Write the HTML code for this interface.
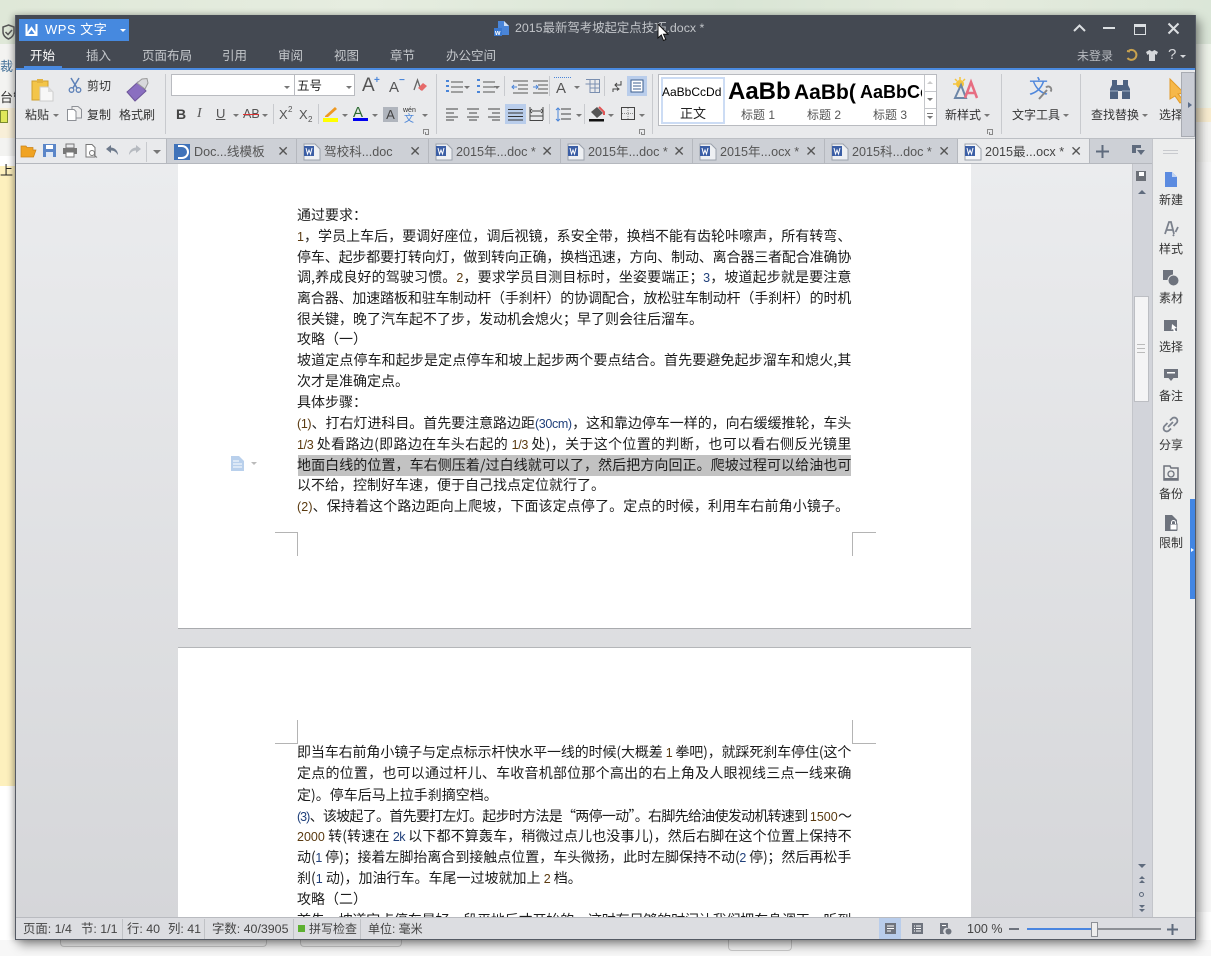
<!DOCTYPE html>
<html lang="zh"><head><meta charset="utf-8"><title>WPS 文字</title>
<style>
html,body{margin:0;padding:0}
body{width:1211px;height:956px;position:relative;overflow:hidden;background:#fff;font-family:"Liberation Sans","Noto Sans CJK SC",sans-serif;font-size:12px;color:#333}
.a{position:absolute;white-space:nowrap}
svg{position:absolute;overflow:visible}
.tab{position:absolute;top:139px;height:25px;background:#cdd0d6;border-right:1px solid #b5b8be;box-sizing:border-box;color:#555;font-size:12.6px;line-height:26px;white-space:nowrap}
.tab span{position:absolute;left:27px;top:0}
.tab i{position:absolute;right:7px;top:0;font-style:normal;font-size:14px;color:#555;font-family:"DejaVu Sans",sans-serif}
.tab svg{left:7px;top:5px}
.l{position:absolute;left:297px;width:554px;height:21px;font-size:14px;line-height:21px;color:#1c1c1c;white-space:nowrap;font-family:"Noto Sans CJK SC","WenQuanYi Zen Hei",sans-serif}
.l span{font-size:12.5px;font-family:"Liberation Sans",sans-serif}
.j{white-space:normal;text-align:justify;text-align-last:justify;text-justify:inter-character;letter-spacing:-.35px}
.menu{position:absolute;top:47px;color:#c5c8cc;font-size:12.5px;line-height:18px;white-space:nowrap}
.rb{position:absolute;font-size:12px;line-height:16px;color:#333;white-space:nowrap}
.arr{position:absolute;width:0;height:0;border-left:3px solid transparent;border-right:3px solid transparent;border-top:3px solid #777}
.sep{position:absolute;width:1px;background:#c8cace}
.side{position:absolute;left:1150px;width:42px;text-align:center;font-size:12px;color:#333;line-height:16px;margin-top:1px}
.st{position:absolute;top:922px;font-size:12.4px;line-height:15px;color:#444;white-space:nowrap}
.stsep{position:absolute;top:919px;width:1px;height:20px;background:#c0c2c6}
.gb{font-weight:700;color:#000;position:absolute;white-space:nowrap;overflow:hidden}
</style></head><body>

<!-- background behind the window -->
<div class="a" style="left:0;top:0;width:1211px;height:44px;background:linear-gradient(90deg,#dfe8d8,#e6ede0 30%,#d9e5d5 60%,#e4ebdd 80%,#dbe6d8)"></div>
<div class="a" style="left:0;top:44px;width:15px;height:112px;background:#f3f3f1"></div>
<div class="a" style="left:0;top:108px;width:15px;height:30px;background:#f8efd8"></div>
<div class="a" style="left:0;top:166px;width:15px;height:620px;background:#fdf0bd"></div>
<div class="a" style="left:0;top:160px;font-size:13px;color:#222">上</div>
<div class="a" style="left:0;top:56px;font-size:13px;color:#47739b">裁</div>
<div class="a" style="left:0;top:87px;font-size:13px;color:#333">台管</div>
<div class="a" style="left:1196px;top:44px;width:15px;height:65px;background:#eef3ea"></div>
<div class="a" style="left:1196px;top:108px;width:15px;height:14px;background:#f9edd0"></div>
<div class="a" style="left:1196px;top:122px;width:15px;height:40px;background:#f4f4f2"></div>
<div class="a" style="left:1196px;top:162px;width:15px;height:750px;background:#f7f7f7"></div>
<div class="a" style="left:0;top:940px;width:1211px;height:16px;background:#f7f7f7"></div>
<div class="a" style="left:60px;top:940px;width:205px;height:6px;border:1px solid #ccc;border-top:0;border-radius:0 0 4px 4px"></div>
<div class="a" style="left:300px;top:940px;width:100px;height:6px;border:1px solid #ccc;border-top:0;border-radius:0 0 4px 4px"></div>
<div class="a" style="left:728px;top:940px;width:62px;height:10px;border:1px solid #ccc;border-top:0;border-radius:0 0 4px 4px"></div>

<!-- window -->
<div class="a" style="left:15px;top:15px;width:1181px;height:925px;background:#d5d6d9;box-shadow:4px 5px 10px rgba(0,0,0,.4),-2px 0 6px rgba(0,0,0,.25)"></div>

<!-- title bar -->
<div class="a" style="left:15px;top:15px;width:1181px;height:53px;background:#444952"></div>
<div class="a" style="left:19px;top:19px;width:110px;height:22px;background:#4689df"></div>
<svg style="left:25px;top:24px" width="13" height="12" viewBox="0 0 13 12"><path d="M1.5 0V11H11.5V0M1.5 11L6.5 4L11.500 11" fill="none" stroke="#fff" stroke-width="2"/></svg>
<div class="a" style="left:45px;top:22px;color:#fff;font-size:13px;line-height:16px;letter-spacing:.5px">WPS 文字</div>
<div class="arr" style="left:120px;top:29px;border-top-color:#fff"></div>
<svg style="left:494px;top:21px" width="16" height="15" viewBox="0 0 16 15"><path d="M4 0H10L15 5V14H4Z" fill="#4a85d8"/><path d="M10 0L15 5H10Z" fill="#cfe0f7"/><rect x="0" y="7" width="8" height="8" fill="#3a78cf"/><text x="1" y="14" font-size="7" fill="#fff" font-weight="700">w</text></svg>
<div class="a" style="left:515px;top:20px;color:#c2c5c9;font-size:12.4px;line-height:17px">2015最新驾考坡起定点技巧.docx *</div>
<svg style="left:657px;top:23px" width="12" height="19" viewBox="0 0 12 19"><path d="M1 1V15L4.300 12L6.500 17.500L8.800 16.500L6.500 11.300H11Z" fill="#fff" stroke="#111" stroke-width="1"/></svg>
<svg style="left:1073px;top:24px" width="13" height="8" viewBox="0 0 13 8"><path d="M1 7L6.500 1.500L12 7" fill="none" stroke="#dcdfe2" stroke-width="2"/></svg>
<div class="a" style="left:1103px;top:27px;width:12px;height:2px;background:#dcdfe2"></div>
<div class="a" style="left:1134px;top:24px;width:10px;height:7px;border:1px solid #dcdfe2;border-top:3px solid #dcdfe2"></div>
<svg style="left:1168px;top:23px" width="11" height="11" viewBox="0 0 11 11"><path d="M.5 .5L10.500 10.500M10.500 .5L.5 10.500" stroke="#dcdfe2" stroke-width="2"/></svg>

<div class="menu" style="left:30px;color:#fff">开始</div>
<div class="menu" style="left:86px">插入</div>
<div class="menu" style="left:142px">页面布局</div>
<div class="menu" style="left:222px">引用</div>
<div class="menu" style="left:278px">审阅</div>
<div class="menu" style="left:334px">视图</div>
<div class="menu" style="left:390px">章节</div>
<div class="menu" style="left:446px">办公空间</div>
<div class="a" style="left:24px;top:66px;width:38px;height:2px;background:#4a8ae0"></div>
<div class="menu" style="left:1077px;top:47px;font-size:12px;color:#b8bbc0">未登录</div>
<svg style="left:1126px;top:49px" width="12" height="13" viewBox="0 0 12 13"><path d="M3 1.500A5 5 0 1 1 1.500 9M4 2.500L1 2" fill="none" stroke="#c9a24e" stroke-width="2"/></svg>
<svg style="left:1146px;top:50px" width="12" height="11" viewBox="0 0 12 11"><path d="M3.500 0L0 2L1.500 5L3 4V11H9V4L10.500 5L12 2L8.500 0L6 1.500Z" fill="#d6d8db"/></svg>
<div class="a" style="left:1168px;top:46px;font-size:15px;line-height:18px;color:#d6d8db">?</div>
<div class="arr" style="left:1180px;top:55px;border-top-color:#d6d8db"></div>

<!-- ribbon -->
<div class="a" style="left:15px;top:68px;width:1181px;height:2px;background:#4a8ae0"></div>
<div class="a" style="left:15px;top:70px;width:1181px;height:68px;background:#e9eaec"></div>
<div class="a" style="left:15px;top:138px;width:1181px;height:1px;background:#bcbfc4"></div>

<!-- paste -->
<svg style="left:31px;top:78px" width="24" height="24" viewBox="0 0 24 24"><rect x="1" y="3" width="16" height="19" fill="#f3c549" stroke="#cfa030"/><rect x="6" y="1" width="6" height="4" fill="#e3b33f"/><path d="M9 9H17L22 14V23H9Z" fill="#f7f7f7" stroke="#ccc"/><path d="M17 9L22 14H17Z" fill="#ddd"/></svg>
<div class="rb" style="left:25px;top:107px">粘贴</div><div class="arr" style="left:53px;top:114px"></div>
<svg style="left:68px;top:78px" width="14" height="15" viewBox="0 0 14 15"><path d="M3 0L9 10M11 0L5 10" stroke="#5d81b8" stroke-width="1.500"/><circle cx="3.500" cy="12" r="2.300" fill="none" stroke="#5d81b8" stroke-width="1.300"/><circle cx="10.500" cy="12" r="2.300" fill="none" stroke="#5d81b8" stroke-width="1.300"/></svg>
<div class="rb" style="left:87px;top:78px">剪切</div>
<svg style="left:67px;top:106px" width="15" height="15" viewBox="0 0 15 15"><path d="M5 .5H11L14.500 3.500V12H5Z" fill="#eee" stroke="#8d9096"/><path d="M.5 3.500H7L9 5.500V14.500H.5Z" fill="#fff" stroke="#8d9096"/></svg>
<div class="rb" style="left:87px;top:107px">复制</div>
<svg style="left:126px;top:77px" width="24" height="25" viewBox="0 0 24 25"><path d="M1 15L12 5L20 14L9 24Z" fill="#8a6fc0" stroke="#6d5599"/><path d="M11 6L16 2L21 1.500L22 6L19 12Z" fill="#d8d8dc" stroke="#999"/></svg>
<div class="rb" style="left:119px;top:107px">格式刷</div>
<div class="sep" style="left:165px;top:74px;height:60px"></div>

<!-- font boxes -->
<div class="a" style="left:171px;top:74px;width:184px;height:22px;background:#fff;border:1px solid #b9bbc0;box-sizing:border-box"></div>
<div class="a" style="left:294px;top:74px;width:1px;height:22px;background:#b9bbc0"></div>
<div class="a" style="left:297px;top:78px;font-size:12.500px;line-height:16px;color:#222">五号</div>
<div class="arr" style="left:284px;top:86px"></div><div class="arr" style="left:346px;top:86px"></div>
<div class="a" style="left:362px;top:74px;font-size:19px;line-height:24px;color:#555">A</div><div class="a" style="left:374px;top:76px;font-size:10px;line-height:10px;color:#4a85d8;font-weight:700">+</div>
<div class="a" style="left:389px;top:78px;font-size:15px;line-height:20px;color:#555">A</div><div class="a" style="left:399px;top:76px;font-size:10px;line-height:10px;color:#4a85d8;font-weight:700">−</div>
<svg style="left:412px;top:78px" width="16" height="16" viewBox="0 0 16 16"><path d="M2 12L5.500 2L9 12" fill="none" stroke="#666" stroke-width="1.300"/><path d="M6 10L11 5L15 8L10 13Z" fill="#e66a6a"/></svg>

<div class="a" style="left:176px;top:105px;font-size:14px;line-height:18px;font-weight:700;color:#444">B</div>
<div class="a" style="left:197px;top:105px;font-size:14px;line-height:18px;font-style:italic;color:#555;font-family:'Liberation Serif',serif">I</div>
<div class="a" style="left:216px;top:105px;font-size:13px;line-height:18px;color:#555;text-decoration:underline">U</div><div class="arr" style="left:233px;top:114px"></div>
<div class="a" style="left:243px;top:106px;font-size:12.500px;line-height:17px;color:#555">AB</div><div class="a" style="left:243px;top:114px;width:16px;height:1px;background:#d33"></div><div class="arr" style="left:262px;top:114px"></div>
<div class="sep" style="left:273px;top:104px;height:20px"></div>
<div class="a" style="left:279px;top:106px;font-size:13px;line-height:17px;color:#555">X</div><div class="a" style="left:288px;top:105px;font-size:8px;line-height:9px;color:#555">2</div>
<div class="a" style="left:299px;top:106px;font-size:13px;line-height:17px;color:#555">X</div><div class="a" style="left:308px;top:115px;font-size:8px;line-height:9px;color:#555">2</div>
<div class="sep" style="left:318px;top:104px;height:20px"></div>
<svg style="left:323px;top:106px" width="16" height="16" viewBox="0 0 16 16"><path d="M2 10L12 1L14 3L5 11L2 11Z" fill="#ee9922"/><rect x="0" y="12" width="15" height="4" fill="#ff0"/></svg><div class="arr" style="left:342px;top:114px"></div>
<div class="a" style="left:353px;top:104px;font-size:15px;line-height:17px;color:#2c6a30">A</div><div class="a" style="left:353px;top:118px;width:15px;height:3px;background:#0000f0"></div><div class="arr" style="left:372px;top:114px"></div>
<div class="a" style="left:383px;top:107px;width:15px;height:15px;background:#b0b5bd;color:#444;font-size:13px;line-height:16px;text-align:center">A</div>
<div class="a" style="left:403px;top:107px;font-size:7px;line-height:8px;color:#333">wén</div><div class="a" style="left:404px;top:114px;font-size:10px;line-height:11px;color:#4a85d8">文</div><div class="arr" style="left:422px;top:114px"></div>
<div class="sep" style="left:436px;top:74px;height:60px"></div>
<svg style="left:423px;top:129px" width="6" height="6" viewBox="0 0 6 6"><path d="M.5 5V.5H5.500V5.500H2.500V3" fill="none" stroke="#888"/></svg>

<!-- paragraph -->
<svg style="left:445px;top:79px;" width="130" height="16" viewBox="0 0 130 16" fill="none" stroke="#555"><path d="M6 3H18M6 8H18M6 13H18"/><path d="M1 2H4M1 7H4M1 12H4" stroke="#4a85d8" stroke-width="2" stroke-dasharray="2 0"/><path d="M38 3H50M38 8H50M38 13H50"/><path d="M32 1H35M32 7H35M32 13H35" stroke="#4a85d8" stroke-width="2"/><path d="M68 2H83M73 6H83M73 10H83M68 14H83"/><path d="M72 8H67M69 6L67 8L69 10" stroke="#4a85d8"/><path d="M88 2H103M93 6H103M93 10H103M88 14H103"/><path d="M88 8H93M91 6L93 8L91 10" stroke="#4a85d8"/></svg>
<div class="arr" style="left:464px;top:86px"></div><div class="arr" style="left:494px;top:86px"></div>
<div class="sep" style="left:504px;top:76px;height:20px"></div><div class="sep" style="left:549px;top:76px;height:20px"></div><div class="sep" style="left:604px;top:76px;height:20px"></div>
<div class="a" style="left:556px;top:80px;font-size:15px;line-height:17px;color:#555">A</div>
<div class="a" style="left:554px;top:77px;width:17px;height:4px;border-top:1px dotted #4a85d8"></div>
<div class="arr" style="left:574px;top:86px"></div>
<svg style="left:585px;top:79px" width="15" height="14" viewBox="0 0 15 14"><path d="M1 .5H14.500V13.500H5V5H.5M5 .5V13.500M10 .5V13.500M5 5H14.500M5 9H14.500" fill="none" stroke="#7a8fb0"/></svg>
<svg style="left:611px;top:80px" width="12" height="13" viewBox="0 0 12 13"><path d="M10 1V5H4M6 3L4 5L6 7M2 12V9H7M6 7.500L8 9L6 10.500" fill="none" stroke="#444"/></svg>
<div class="a" style="left:627px;top:76px;width:20px;height:20px;background:#b9cdeb"></div>
<svg style="left:630px;top:79px" width="14" height="14" viewBox="0 0 14 14"><rect x="1" y="1" width="12" height="12" fill="#fff" stroke="#3d5f8f"/><path d="M3 4H11M3 7H11M3 10H11" stroke="#3d5f8f"/></svg>

<svg style="left:445px;top:107px" width="70" height="14" viewBox="0 0 70 14" fill="none" stroke="#444"><path d="M1 2H13M1 6H9M1 10H13M1 13H9"/><path d="M22 2H34M24 6H32M22 10H34M24 13H32"/><path d="M43 2H55M47 6H55M43 10H55M47 13H55"/></svg>
<div class="a" style="left:505px;top:104px;width:21px;height:20px;background:#b9cdeb"></div>
<svg style="left:508px;top:108px" width="15" height="13" viewBox="0 0 15 13" fill="none" stroke="#333"><path d="M0 1.500H15M0 5H15M0 8.500H15M0 12H15"/></svg>
<svg style="left:529px;top:107px" width="15" height="14" viewBox="0 0 15 14" fill="none" stroke="#444"><path d="M1 0V13.500H14M14 0V13M3 4H12M1 9H14M3 2L1 4L3 6M12 2L14 4L12 6" /></svg>
<div class="sep" style="left:549px;top:104px;height:20px"></div>
<svg style="left:555px;top:107px" width="16" height="15" viewBox="0 0 16 15" fill="none"><path d="M6 2H16M6 7H16M6 12H16" stroke="#444"/><path d="M3 1V14M1 3L3 1L5 3M1 12L3 14L5 12" stroke="#4a85d8"/></svg>
<div class="arr" style="left:576px;top:114px"></div>
<div class="sep" style="left:584px;top:104px;height:20px"></div>
<svg style="left:589px;top:106px" width="16" height="16" viewBox="0 0 16 16"><path d="M2 6L8 1L14 7L8 12Z" fill="#555"/><path d="M10 1L15 6L15 9" fill="none" stroke="#e05555" stroke-width="2"/><rect x="0" y="13" width="15" height="2.500" fill="#111"/></svg><div class="arr" style="left:608px;top:114px"></div>
<svg style="left:621px;top:107px" width="14" height="13" viewBox="0 0 14 13" fill="none"><rect x=".5" y=".5" width="13" height="12" stroke="#444"/><path d="M7 1V12M1 6.500H13" stroke="#888" stroke-dasharray="1 1"/></svg><div class="arr" style="left:639px;top:114px"></div>
<div class="sep" style="left:652px;top:74px;height:60px"></div>
<svg style="left:639px;top:129px" width="6" height="6" viewBox="0 0 6 6"><path d="M.5 5V.5H5.500V5.500H2.500V3" fill="none" stroke="#888"/></svg>

<!-- styles gallery -->
<div class="a" style="left:658px;top:74px;width:279px;height:52px;background:#fff;border:1px solid #b9bbc0;box-sizing:border-box"></div>
<div class="a" style="left:661px;top:77px;width:64px;height:47px;border:2px solid #ccdcf4;box-sizing:border-box"></div>
<div class="a" style="left:662px;top:84px;font-size:12px;line-height:16px;color:#000">AaBbCcDd</div>
<div class="rb" style="left:680px;top:106px;font-size:13px;color:#222">正文</div>
<div class="gb" style="left:728px;top:78px;font-size:24px;line-height:28px;width:63px">AaBb</div>
<div class="rb" style="left:741px;top:107px;color:#555">标题 1</div>
<div class="gb" style="left:794px;top:80px;font-size:21px;line-height:25px;width:62px">AaBb(</div>
<div class="rb" style="left:807px;top:107px;color:#555">标题 2</div>
<div class="gb" style="left:860px;top:81px;font-size:18px;line-height:23px;width:62px">AaBbCc</div>
<div class="rb" style="left:873px;top:107px;color:#555">标题 3</div>
<div class="a" style="left:924px;top:75px;width:1px;height:50px;background:#c5c7cb"></div>
<div class="a" style="left:925px;top:91px;width:11px;height:1px;background:#c5c7cb"></div><div class="a" style="left:925px;top:108px;width:11px;height:1px;background:#c5c7cb"></div>
<div class="a" style="left:927px;top:81px;width:0;height:0;border-left:3px solid transparent;border-right:3px solid transparent;border-bottom:3px solid #ccc"></div>
<div class="arr" style="left:927px;top:98px"></div><div class="arr" style="left:927px;top:116px"></div><div class="a" style="left:927px;top:113px;width:6px;height:1px;background:#777"></div>

<svg style="left:953px;top:77px" width="25" height="22" viewBox="0 0 25 22"><circle cx="7" cy="7" r="4" fill="#f5c43c"/><path d="M7 0V3M0 7H3M2 2L4 4M12 2L10 4" stroke="#f5c43c" stroke-width="1.500"/><path d="M2 21L8 8L13 21Z" fill="none" stroke="#6d87a8" stroke-width="2"/><path d="M12 21L18 5L24 21M14 16H22" fill="none" stroke="#e76d81" stroke-width="2.500"/></svg>
<div class="rb" style="left:945px;top:107px">新样式</div><div class="arr" style="left:984px;top:114px"></div>
<svg style="left:987px;top:129px" width="6" height="6" viewBox="0 0 6 6"><path d="M.5 5V.5H5.500V5.500H2.500V3" fill="none" stroke="#888"/></svg>
<div class="sep" style="left:1001px;top:74px;height:60px"></div>
<div class="a" style="left:1029px;top:76px;font-size:19px;line-height:23px;color:#4f87dc">文</div>
<svg style="left:1037px;top:86px" width="15" height="15" viewBox="0 0 15 15"><path d="M2 13L10 4M9 1.500A3 3 0 0 1 13.500 5.500" fill="none" stroke="#888" stroke-width="2"/></svg>
<div class="rb" style="left:1012px;top:107px">文字工具</div><div class="arr" style="left:1063px;top:114px"></div>
<div class="sep" style="left:1080px;top:74px;height:60px"></div>
<svg style="left:1109px;top:79px" width="22" height="21" viewBox="0 0 22 21"><path d="M3 1H8V6H14V1H19V6L21 10V20H13V12H9V20H1V10L3 6Z" fill="#4d6280"/><path d="M1 12H9M13 12H21" stroke="#9fb0c6"/></svg>
<div class="rb" style="left:1091px;top:107px">查找替换</div><div class="arr" style="left:1142px;top:114px"></div>
<svg style="left:1170px;top:79px" width="14" height="24" viewBox="0 0 14 24"><path d="M0 0L14 14L8 15L14 22L10 24L5 17L0 20Z" fill="#f6b84a" stroke="#e29a27"/></svg>
<div class="rb" style="left:1159px;top:107px">选择</div>
<div class="a" style="left:1181px;top:72px;width:14px;height:65px;background:#c9ccd4;border:1px solid #a8abb2;box-sizing:border-box"></div>
<div class="a" style="left:1188px;top:102px;width:0;height:0;border-top:3px solid transparent;border-bottom:3px solid transparent;border-left:4px solid #5c6e8a"></div>

<!-- tab bar -->
<div class="a" style="left:15px;top:139px;width:1137px;height:25px;background:#e9eaec"></div>
<svg style="left:21px;top:144px" width="15" height="14" viewBox="0 0 15 14"><path d="M0 2H5L6 3.500H12V6H15L12.500 13H0Z" fill="#f0a322" stroke="#c9831a" stroke-width=".7"/></svg>
<svg style="left:43px;top:144px" width="13" height="13" viewBox="0 0 13 13"><path d="M0 0H13V13H0Z" fill="#5b86c8"/><rect x="3" y="1" width="7" height="4" fill="#fff"/><rect x="3" y="8" width="7" height="5" fill="#dfe8f5"/></svg>
<svg style="left:63px;top:144px" width="14" height="13" viewBox="0 0 14 13"><rect x="3" y="0" width="8" height="4" fill="none" stroke="#777"/><rect x="0" y="4" width="14" height="6" fill="#777"/><rect x="3" y="8" width="8" height="5" fill="#fff" stroke="#777"/></svg>
<svg style="left:85px;top:144px" width="13" height="14" viewBox="0 0 13 14"><path d="M1 .5H7L10 3.500V13H1Z" fill="#fff" stroke="#777"/><circle cx="7" cy="9" r="2.500" fill="none" stroke="#777"/><path d="M9 11L12 13.500" stroke="#777"/></svg>
<svg style="left:106px;top:145px" width="13" height="11" viewBox="0 0 13 11"><path d="M5 0L0 4L5 8V5.500C8 5.500 10 7 12 10C12 6 9 2.700 5 2.500Z" fill="#6e7a8c"/></svg>
<svg style="left:128px;top:145px" width="13" height="11" viewBox="0 0 13 11"><path d="M8 0L13 4L8 8V5.500C5 5.500 3 7 1 10C1 6 4 2.700 8 2.500Z" fill="#b6bac0"/></svg>
<div class="sep" style="left:146px;top:142px;height:20px"></div>
<div class="arr" style="left:153px;top:150px;border-left-width:4px;border-right-width:4px;border-top-width:4px"></div>
<div class="a" style="left:166px;top:139px;width:1px;height:25px;background:#b5b8be"></div>

<div class="tab" style="left:167px;width:130px"><svg width="16" height="16" viewBox="0 0 16 16"><rect width="16" height="16" fill="#3f72b9"/><path d="M4 2H8A6 6 0 0 1 8 14H4" fill="none" stroke="#fff" stroke-width="2"/></svg><span>Doc...线模板</span><i>✕</i></div>
<div class="tab" style="left:297px;width:132px"><svg width="16" height="16" viewBox="0 0 16 16"><path d="M0 0H11L16 5V16H0Z" fill="#eef0f3" stroke="#9ca2ac"/><rect x="0" y="2" width="10" height="10" fill="#3b5ea5"/><path d="M2 4L3.500 10L5 6L6.500 10L8 4" fill="none" stroke="#fff"/></svg><span>驾校科...doc</span><i>✕</i></div>
<div class="tab" style="left:429px;width:132px"><svg width="16" height="16" viewBox="0 0 16 16"><path d="M0 0H11L16 5V16H0Z" fill="#eef0f3" stroke="#9ca2ac"/><rect x="0" y="2" width="10" height="10" fill="#3b5ea5"/><path d="M2 4L3.500 10L5 6L6.500 10L8 4" fill="none" stroke="#fff"/></svg><span>2015年...doc *</span><i>✕</i></div>
<div class="tab" style="left:561px;width:132px"><svg width="16" height="16" viewBox="0 0 16 16"><path d="M0 0H11L16 5V16H0Z" fill="#eef0f3" stroke="#9ca2ac"/><rect x="0" y="2" width="10" height="10" fill="#3b5ea5"/><path d="M2 4L3.500 10L5 6L6.500 10L8 4" fill="none" stroke="#fff"/></svg><span>2015年...doc *</span><i>✕</i></div>
<div class="tab" style="left:693px;width:132px"><svg width="16" height="16" viewBox="0 0 16 16"><path d="M0 0H11L16 5V16H0Z" fill="#eef0f3" stroke="#9ca2ac"/><rect x="0" y="2" width="10" height="10" fill="#3b5ea5"/><path d="M2 4L3.500 10L5 6L6.500 10L8 4" fill="none" stroke="#fff"/></svg><span>2015年...ocx *</span><i>✕</i></div>
<div class="tab" style="left:825px;width:133px"><svg width="16" height="16" viewBox="0 0 16 16"><path d="M0 0H11L16 5V16H0Z" fill="#eef0f3" stroke="#9ca2ac"/><rect x="0" y="2" width="10" height="10" fill="#3b5ea5"/><path d="M2 4L3.500 10L5 6L6.500 10L8 4" fill="none" stroke="#fff"/></svg><span>2015科...doc *</span><i>✕</i></div>
<div class="tab" style="left:958px;width:132px;background:#e9eaec"><svg width="16" height="16" viewBox="0 0 16 16"><path d="M0 0H11L16 5V16H0Z" fill="#f6f7f8" stroke="#9ca2ac"/><rect x="0" y="2" width="10" height="10" fill="#3b5ea5"/><path d="M2 4L3.500 10L5 6L6.500 10L8 4" fill="none" stroke="#fff"/></svg><span style="color:#444">2015最...ocx *</span><i>✕</i></div>
<div class="tab" style="left:1090px;width:62px;background:#cdd0d6;border-right:0"></div>
<svg style="left:1096px;top:145px" width="13" height="13" viewBox="0 0 13 13"><path d="M6.500 0V13M0 6.500H13" stroke="#5f6b7d" stroke-width="2"/></svg>
<svg style="left:1132px;top:145px" width="13" height="11" viewBox="0 0 13 11"><path d="M0 0H9V3H4V8H0Z" fill="#5f6b7d"/><path d="M5 5H13L9 10Z" fill="#5f6b7d"/></svg>
<div class="a" style="left:15px;top:163px;width:1137px;height:1px;background:#b5b8be"></div>

<!-- document area -->
<div class="a" style="left:16px;top:164px;width:1116px;height:753px;background:linear-gradient(180deg,#ebecee,#d5d6d9)"></div>
<div class="a" style="left:178px;top:164px;width:793px;height:464px;background:#fff;border-bottom:1px solid #a9abae;box-sizing:content-box"></div>
<div class="a" style="left:178px;top:647px;width:793px;height:1px;background:#b4b6b9"></div>
<div class="a" style="left:178px;top:648px;width:793px;height:269px;background:#fff"></div>

<!-- crop marks -->
<div class="a" style="left:275px;top:532px;width:22px;height:23px;border-top:1px solid #b4b4b4;border-right:1px solid #b4b4b4"></div>
<div class="a" style="left:852px;top:532px;width:23px;height:23px;border-top:1px solid #b4b4b4;border-left:1px solid #b4b4b4"></div>
<div class="a" style="left:275px;top:720px;width:22px;height:23px;border-bottom:1px solid #b4b4b4;border-right:1px solid #b4b4b4"></div>
<div class="a" style="left:852px;top:720px;width:23px;height:23px;border-bottom:1px solid #b4b4b4;border-left:1px solid #b4b4b4"></div>

<!-- selection -->
<div class="a" style="left:298px;top:455px;width:553px;height:21px;background:#c2c2c2"></div>
<svg style="left:231px;top:456px" width="14" height="15" viewBox="0 0 14 15"><path d="M0 0H8L13 5V15H0Z" fill="#b9d0ec"/><path d="M2 5H8M2 8H11M2 11H11" stroke="#fff"/></svg>
<div class="arr" style="left:251px;top:462px;border-top-color:#bbb"></div>

<!-- page 1 text -->
<div class="l" style="top:205px">通过要求：</div>
<div class="l j" style="top:226px"><span style="color:#5a3a10">1</span>，学员上车后，要调好座位，调后视镜，系安全带，换档不能有齿轮咔嚓声，所有转弯、</div>
<div class="l j" style="top:247px">停车、起步都要打转向灯，做到转向正确，换档迅速，方向、制动、离合器三者配合准确协</div>
<div class="l j" style="top:267px">调,养成良好的驾驶习惯。<span style="color:#5a3a10">2</span>，要求学员目测目标时，坐姿要端正；<span style="color:#1f3f7a">3</span>，坡道起步就是要注意</div>
<div class="l j" style="top:288px">离合器、加速踏板和驻车制动杆（手刹杆）的协调配合，放松驻车制动杆（手刹杆）的时机</div>
<div class="l" style="top:309px">很关键，晚了汽车起不了步，发动机会熄火；早了则会往后溜车。</div>
<div class="l" style="top:329px">攻略（一）</div>
<div class="l j" style="top:350px">坡道定点停车和起步是定点停车和坡上起步两个要点结合。首先要避免起步溜车和熄火,其</div>
<div class="l" style="top:371px">次才是准确定点。</div>
<div class="l" style="top:392px">具体步骤：</div>
<div class="l j" style="top:413px"><span style="color:#5a3a10">(1)</span>、打右灯进科目。首先要注意路边距<span style="color:#1f3f7a">(30cm)</span>，这和靠边停车一样的，向右缓缓推轮，车头</div>
<div class="l j" style="top:434px"><span style="color:#5a3a10">1/3</span> 处看路边(即路边在车头右起的 <span style="color:#5a3a10">1/3</span> 处)，关于这个位置的判断，也可以看右侧反光镜里</div>
<div class="l j" style="top:455px">地面白线的位置，车右侧压着/过白线就可以了，然后把方向回正。爬坡过程可以给油也可</div>
<div class="l" style="top:475px">以不给，控制好车速，便于自己找点定位就行了。</div>
<div class="l" style="top:496px;letter-spacing:.12px"><span style="color:#5a3a10">(2)</span>、保持着这个路边距向上爬坡，下面该定点停了。定点的时候，利用车右前角小镜子。</div>

<!-- page 2 text -->
<div class="l j" style="top:742px">即当车右前角小镜子与定点标示杆快水平一线的时候(大概差 <span style="color:#5a3a10">1</span> 拳吧)，就踩死刹车停住(这个</div>
<div class="l j" style="top:763px">定点的位置，也可以通过杆儿、车收音机部位那个高出的右上角及人眼视线三点一线来确</div>
<div class="l" style="top:785px">定)。停车后马上拉手刹摘空档。</div>
<div class="l j" style="top:806px;letter-spacing:-1px"><span style="color:#1f3f7a">(3)</span>、该坡起了。首先要打左灯。起步时方法是“两停一动”。右脚先给油使发动机转速到 <span style="color:#5a3a10;letter-spacing:0">1500</span>～</div>
<div class="l j" style="top:826px;letter-spacing:-.6px"><span style="color:#5a3a10;letter-spacing:0">2000</span> 转(转速在 <span style="color:#1f3f7a">2k</span> 以下都不算轰车，稍微过点儿也没事儿)，然后右脚在这个位置上保持不</div>
<div class="l j" style="top:847px">动(<span style="color:#1f3f7a">1</span> 停)；接着左脚抬离合到接触点位置，车头微扬，此时左脚保持不动(<span style="color:#1f3f7a">2</span> 停)；然后再松手</div>
<div class="l" style="top:868px">刹(<span style="color:#1f3f7a">1</span> 动)，加油行车。车尾一过坡就加上 <span style="color:#5a3a10">2</span> 档。</div>
<div class="l" style="top:889px">攻略（二）</div>
<div class="a" style="left:297px;top:910px;width:554px;height:7px;overflow:hidden"><div class="l j" style="left:0;top:0">首先，坡道定点停车是好一段平地后才开始的，这时有足够的时间让我们把车身调正，听到</div></div>

<!-- scrollbar -->
<div class="a" style="left:1132px;top:164px;width:20px;height:753px;background:#d2d4da;border-left:1px solid #c3c5ca;box-sizing:border-box"></div>
<div class="a" style="left:1136px;top:171px;width:10px;height:10px;background:#6c7078"></div>
<div class="a" style="left:1139px;top:172px;width:5px;height:4px;background:#fff"></div>
<div class="a" style="left:1138px;top:190px;width:0;height:0;border-left:4px solid transparent;border-right:4px solid transparent;border-bottom:4px solid #5f6b7d"></div>
<div class="a" style="left:1134px;top:296px;width:15px;height:106px;background:#f4f4f5;border:1px solid #bcbec3;box-sizing:border-box"></div>
<div class="a" style="left:1137px;top:344px;width:8px;height:1px;background:#bbb"></div><div class="a" style="left:1137px;top:348px;width:8px;height:1px;background:#bbb"></div><div class="a" style="left:1137px;top:352px;width:8px;height:1px;background:#bbb"></div>
<div class="arr" style="left:1138px;top:864px;border-left-width:4px;border-right-width:4px;border-top-width:4px;border-top-color:#5f6b7d"></div>
<svg style="left:1138px;top:876px" width="8" height="8" viewBox="0 0 8 8"><path d="M4 0L7 3H1ZM4 4L7 7H1Z" fill="#5f6b7d"/></svg>
<div class="a" style="left:1139px;top:892px;width:3px;height:3px;border:1px solid #5f6b7d;border-radius:50%"></div>
<svg style="left:1138px;top:905px" width="8" height="8" viewBox="0 0 8 8"><path d="M1 0H7L4 3ZM1 4H7L4 7Z" fill="#5f6b7d"/></svg>

<!-- right sidebar -->
<div class="a" style="left:1152px;top:139px;width:43px;height:778px;background:#eceded;border-left:1px solid #c3c5ca;box-sizing:border-box"></div>
<div class="a" style="left:1163px;top:150px;width:15px;height:1px;background:#c8cace"></div><div class="a" style="left:1163px;top:153px;width:15px;height:1px;background:#c8cace"></div>
<svg style="left:1165px;top:172px" width="12" height="15" viewBox="0 0 12 15"><path d="M0 0H7L12 5V15H0Z" fill="#5b8be0"/><path d="M7 0L12 5H7Z" fill="#c3d5f4"/></svg>
<div class="side" style="top:191px">新建</div>
<svg style="left:1164px;top:221px" width="15" height="16" viewBox="0 0 15 16"><path d="M1 13L5 1H7L10 13M2.500 9H9" fill="none" stroke="#7c828d" stroke-width="1.800"/><path d="M14 6L11.500 11M10 13.500L9 15" stroke="#7c828d" stroke-width="1.800"/></svg>
<div class="side" style="top:240px">样式</div>
<svg style="left:1163px;top:270px" width="16" height="16" viewBox="0 0 16 16"><rect width="10" height="10" fill="#6e737d"/><circle cx="10.500" cy="10.500" r="5.500" fill="#6e737d" stroke="#eceded"/></svg>
<div class="side" style="top:289px">素材</div>
<svg style="left:1164px;top:320px" width="14" height="12" viewBox="0 0 14 12"><rect width="13" height="11" fill="#6e737d"/><path d="M8 4L13 8L10.500 8.500L12 12H10L9 9L7.500 10Z" fill="#fff"/></svg>
<div class="side" style="top:338px">选择</div>
<svg style="left:1164px;top:369px" width="14" height="13" viewBox="0 0 14 13"><path d="M0 0H14V9H9.500L7 12L4.500 9H0Z" fill="#6e737d"/><rect x="3" y="3" width="8" height="1.500" fill="#fff"/></svg>
<div class="side" style="top:387px">备注</div>
<svg style="left:1163px;top:417px" width="15" height="15" viewBox="0 0 15 15" fill="none" stroke="#7c828d" stroke-width="1.800"><path d="M7 3.500L9 1.500A2.500 2.500 0 0 1 13.500 6L10.500 9M8 11.500L6 13.500A2.500 2.500 0 0 1 1.500 9L4.500 6M5 10L10 5"/></svg>
<div class="side" style="top:436px">分享</div>
<svg style="left:1164px;top:466px" width="14" height="14" viewBox="0 0 14 14"><path d="M0 0H6L7 2H14V14H0Z" fill="none" stroke="#6e737d" stroke-width="1.500"/><circle cx="7" cy="8" r="3" fill="none" stroke="#6e737d" stroke-width="1.300"/><rect y="12" width="14" height="2" fill="#6e737d"/></svg>
<div class="side" style="top:485px">备份</div>
<svg style="left:1165px;top:515px" width="13" height="16" viewBox="0 0 13 16"><path d="M0 0H7L12 5V16H0Z" fill="#6e737d"/><rect x="5" y="9" width="7" height="6" fill="#fff" stroke="#6e737d"/><path d="M6.500 9V7.500A2 2 0 0 1 10.500 7.500V9" fill="none" stroke="#fff"/></svg>
<div class="side" style="top:534px">限制</div>
<div class="a" style="left:1190px;top:499px;width:5px;height:100px;background:#4286e4"></div>
<div class="a" style="left:1191px;top:548px;width:0;height:0;border-top:2px solid transparent;border-bottom:2px solid transparent;border-left:3px solid #fff"></div>

<!-- status bar -->
<div class="a" style="left:15px;top:917px;width:1181px;height:23px;background:#dcdde1;border-top:1px solid #b9bbc0;box-sizing:border-box"></div>
<div class="a" style="left:15px;top:939px;width:1181px;height:1px;background:#555a64"></div>
<div class="a" style="left:15px;top:15px;width:1px;height:925px;background:#555a64"></div>
<div class="a" style="left:1195px;top:15px;width:1px;height:925px;background:#555a64"></div>
<div class="st" style="left:23px">页面: 1/4</div><div class="st" style="left:81px">节: 1/1</div><div class="stsep" style="left:122px"></div>
<div class="st" style="left:127px">行: 40</div><div class="st" style="left:168px">列: 41</div><div class="stsep" style="left:204px"></div>
<div class="st" style="left:212px">字数: 40/3905</div><div class="stsep" style="left:293px"></div>
<div class="a" style="left:298px;top:925px;width:7px;height:7px;background:#5db031"></div>
<div class="st" style="left:309px;font-size:12px">拼写检查</div><div class="stsep" style="left:360px"></div>
<div class="st" style="left:368px;font-size:12px">单位: 毫米</div>
<div class="a" style="left:879px;top:918px;width:22px;height:21px;background:#b9cdeb"></div>
<svg style="left:885px;top:923px" width="11" height="11" viewBox="0 0 11 11"><rect width="11" height="11" fill="#6e737d"/><path d="M2 3H9M2 5.500H9M2 8H6" stroke="#fff"/></svg>
<svg style="left:912px;top:923px" width="11" height="11" viewBox="0 0 11 11"><rect width="11" height="11" fill="#6e737d"/><path d="M4 3H9M4 5.500H9M4 8H9M2 3H3M2 5.500H3M2 8H3" stroke="#fff"/></svg>
<svg style="left:940px;top:923px" width="12" height="12" viewBox="0 0 12 12"><path d="M0 0H8V5A3.500 3.500 0 0 0 4.500 11H0Z" fill="#6e737d"/><circle cx="8.500" cy="8.500" r="3" fill="#6e737d"/><path d="M2 2.500H6" stroke="#fff"/></svg>
<div class="st" style="left:967px;font-size:12.500px">100 %</div>
<div class="a" style="left:1009px;top:928px;width:10px;height:2px;background:#6e737d"></div>
<div class="a" style="left:1027px;top:928px;width:65px;height:2px;background:#4a86e0"></div>
<div class="a" style="left:1092px;top:928px;width:69px;height:2px;background:#8d9096"></div>
<div class="a" style="left:1091px;top:922px;width:5px;height:13px;background:#eee;border:1px solid #8d9096"></div>
<svg style="left:1167px;top:924px" width="11" height="11" viewBox="0 0 11 11"><path d="M5.500 0V11M0 5.500H11" stroke="#5f6b7d" stroke-width="2"/></svg>

<!-- outer left icons -->
<svg style="left:2px;top:24px" width="13" height="16" viewBox="0 0 13 16"><path d="M6.500 1L12 3V8C12 11.500 9 14 6.500 15C4 14 1 11.500 1 8V3Z" fill="none" stroke="#555" stroke-width="1.500"/><path d="M3.500 8L6 10.500L10 6" fill="none" stroke="#555" stroke-width="1.500"/></svg>
<div class="a" style="left:0;top:110px;width:8px;height:13px;background:#dfe85a;border:1px solid #7a8a30;box-sizing:border-box"></div>
</body></html>
